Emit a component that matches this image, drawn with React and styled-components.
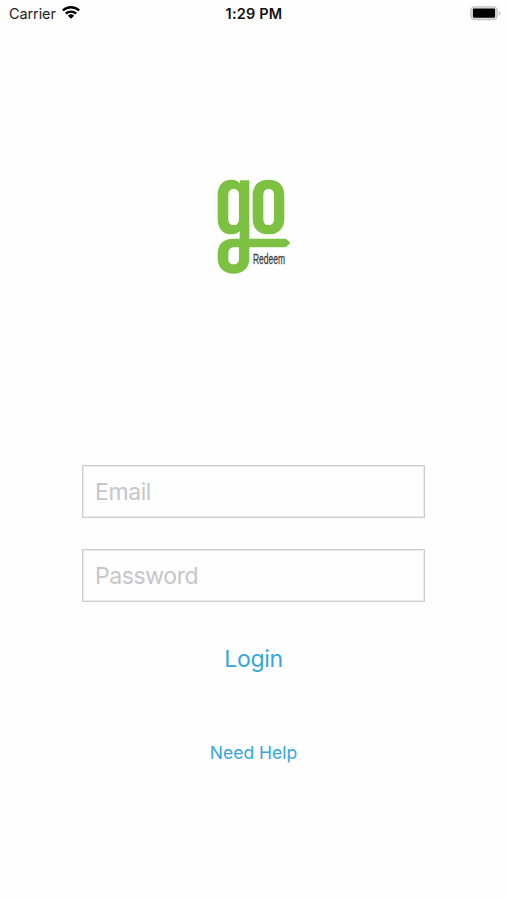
import React from 'react'
import styled, { createGlobalStyle } from 'styled-components'

function App() {
    return (
        <>
            <GlobalStyle />
            <Container>
                <StatusBar>
                    <Carrier>
                        <Label>Carrier</Label>
                        <WifiIcon />
                    </Carrier>
                    <Time>1:29 PM</Time>
                    <BatteryWrap>
                        <BatteryIcon />
                    </BatteryWrap>
                </StatusBar>
                <LogoWrap>
                    <Logo />
                </LogoWrap>
                <Form>
                    <Input type="email" placeholder="Email" aria-label="Email" />
                    <Input type="password" placeholder="Password" aria-label="Password" />
                    <LoginButton type="button">Login</LoginButton>
                    <HelpButton type="button">Need Help</HelpButton>
                </Form>
            </Container>
        </>
    )
}

function WifiIcon() {
    return (
        <svg width="18" height="13" viewBox="0 0 54 39">
            <g fill="none" stroke="#000" strokeWidth="7">
                <path d="M2.500 13.500 C16 0.500 38 0.500 51.500 13.500" />
                <path d="M11.500 23 C20 14.500 34 14.500 42.500 23" />
            </g>
            <path d="M17.500 29 C23 23.500 31 23.500 36.500 29 L27 38.500 Z" />
        </svg>
    )
}

function BatteryIcon() {
    return (
        <svg width="31" height="15" viewBox="0 0 31 15">
            <rect x="0.900" y="0.900" width="26.200" height="12.600" rx="3.800" fill="#e6e6e6" stroke="#c2c2c2" strokeWidth="1.400" />
            <rect x="2.900" y="2.600" width="22.200" height="9.200" rx="1" fill="#000" />
            <path d="M28.800 5 C31 6 31 8.800 28.800 9.800 Z" fill="#c2c2c2" />
        </svg>
    )
}

function Logo() {
    return (
        <LogoSvg width="100" height="115" viewBox="0 0 300 345">
            <g fill="#7dc142" fillRule="evenodd">
                <path d="M38 76 C38 45 54 29 80 29 C91 29 99 33 105 40 L105 31 L133 31 L133 206 L243 206 L256 218 L243 232 L133 232 L133 264 C133 294 115 311 86 311 C56 311 38 294 38 264 L38 252 C38 222 55 206 85 206 L104 206 L104 184 C98 190 90 193 80 193 C54 193 38 177 38 146 Z M70 76 L70 146 C70 158 75 165 86 165 C97 165 102 158 102 146 L102 76 C102 64 97 57 86 57 C75 57 70 64 70 76 Z M102 232 L88 232 C76 232 70 239 70 250 L70 265 C70 277 75 283 86 283 C97 283 102 277 102 265 Z" />
                <path d="M143 76 C143 46 161 29 190.500 29 C220 29 238 46 238 76 L238 146 C238 176 220 193 190.500 193 C161 193 143 176 143 146 Z M175 76 L175 146 C175 158 180 165 191 165 C202 165 207 158 207 146 L207 76 C207 64 202 57 191 57 C180 57 175 64 175 76 Z" />
            </g>
            <LogoText x="144" y="282" textLength="96" lengthAdjust="spacingAndGlyphs">Redeem</LogoText>
        </LogoSvg>
    )
}

const GlobalStyle = createGlobalStyle`
  * {
    box-sizing: border-box;
  }

  body {
    margin: 0;
    background: #fff;
    font-family: Inter, "Liberation Sans", sans-serif;
  }
`

const Container = styled.div`
  width: 100%;
  height: 900px;
  overflow: hidden;
  background: #fefefe;
`

const StatusBar = styled.div`
  display: grid;
  grid-template-columns: 1fr auto 1fr;
  align-items: center;
  height: 27px;
  padding: 0 6px 0 9px;
`

const Carrier = styled.div`
  display: flex;
  align-items: center;
  gap: 6px;

  svg {
    margin-top: -2px;
  }
`

const Label = styled.span`
  width: 47px;
  font-size: 14.500px;
  line-height: 18px;
  letter-spacing: -0.1px;
  white-space: nowrap;
  color: #222;
`

const Time = styled.span`
  margin-right: 2px;
  font-size: 14.500px;
  font-weight: 600;
  line-height: 18px;
  letter-spacing: 0.2px;
  color: #111;
`

const BatteryWrap = styled.div`
  display: flex;
  justify-content: flex-end;
`

const LogoWrap = styled.div`
  display: flex;
  justify-content: center;
  margin-top: 143px;
  padding-left: 3px;
`

const LogoSvg = styled.svg`
  overflow: visible;
`

const LogoText = styled.text`
  font-family: "Liberation Sans Narrow", "Liberation Sans", sans-serif;
  font-size: 42px;
  fill: #3c3c3c;
  stroke: #3c3c3c;
  stroke-width: 0.8px;
`

const Form = styled.div`
  display: flex;
  flex-direction: column;
  align-items: center;
  margin-top: 180px;
`

const Input = styled.input`
  width: 343px;
  height: 53px;
  margin-bottom: 31px;
  padding: 0 12px;
  border: 1px solid #cdcdcd;
  border-radius: 0;
  outline: none;
  background: transparent;
  box-shadow: inset 0 0 0 1px #ebebeb;
  font-family: inherit;
  font-size: 23px;
  letter-spacing: -0.4px;

  &::placeholder {
    color: #c6c6c8;
    opacity: 1;
  }
`

const Button = styled.button`
  padding: 0;
  border: none;
  background: none;
  font-family: inherit;
  color: #35a7dc;
`

const LoginButton = styled(Button)`
  font-size: 23px;
  line-height: 30px;
  letter-spacing: -0.3px;
  margin-top: 11px;
`

const HelpButton = styled(Button)`
  font-size: 17.500px;
  line-height: 24px;
  margin-top: 67px;
`

export default App
